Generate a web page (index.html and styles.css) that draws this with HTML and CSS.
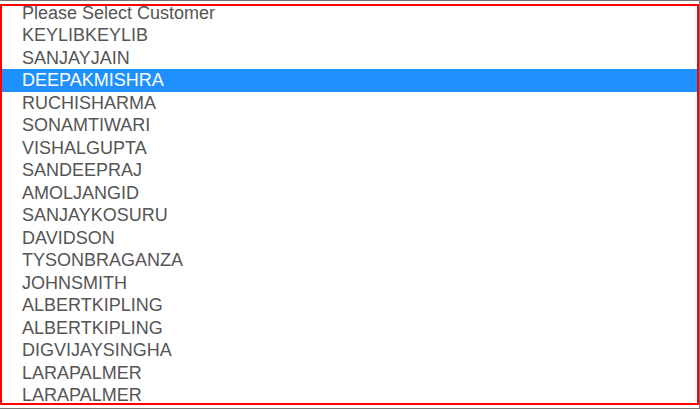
FILE: index.html
```html
<!DOCTYPE html>
<html>
<head>
<meta charset="utf-8">
<link rel="stylesheet" href="styles.css">
</head>
<body>
<div class="frame">
  <div class="listbox">
    <ul class="options">
      <li class="opt">Please Select Customer</li>
      <li class="opt">KEYLIBKEYLIB</li>
      <li class="opt">SANJAYJAIN</li>
      <li class="opt selected">DEEPAKMISHRA</li>
      <li class="opt">RUCHISHARMA</li>
      <li class="opt">SONAMTIWARI</li>
      <li class="opt">VISHALGUPTA</li>
      <li class="opt">SANDEEPRAJ</li>
      <li class="opt">AMOLJANGID</li>
      <li class="opt">SANJAYKOSURU</li>
      <li class="opt">DAVIDSON</li>
      <li class="opt">TYSONBRAGANZA</li>
      <li class="opt">JOHNSMITH</li>
      <li class="opt">ALBERTKIPLING</li>
      <li class="opt">ALBERTKIPLING</li>
      <li class="opt">DIGVIJAYSINGHA</li>
      <li class="opt">LARAPALMER</li>
      <li class="opt">LARAPALMER</li>
    </ul>
  </div>
</div>
</body>
</html>
```
FILE: styles.css
```css
html, body {
  margin: 0;
  padding: 0;
  background: #ffffff;
}
.frame {
  box-sizing: border-box;
  width: 700px;
  height: 409px;
  border-top: 1px solid #767676;
  border-bottom: 1px solid #767676;
  border-right: 1px solid #767676;
  padding-top: 3px;
  background: #ffffff;
}
.listbox {
  box-sizing: border-box;
  width: 699px;
  height: 401px;
  border: 2px solid #ff0000;
  overflow: hidden;
}
.options {
  list-style: none;
  margin: -4.5px 0 0 0;
  padding: 0;
}
.opt {
  height: 22.5px;
  line-height: 22.5px;
  padding-left: 20px;
  font-family: "Liberation Sans", Arial, sans-serif;
  font-size: 18px;
  color: #555555;
  white-space: nowrap;
}
.opt.selected {
  background: #1e90ff;
  color: #ffffff;
}
```
